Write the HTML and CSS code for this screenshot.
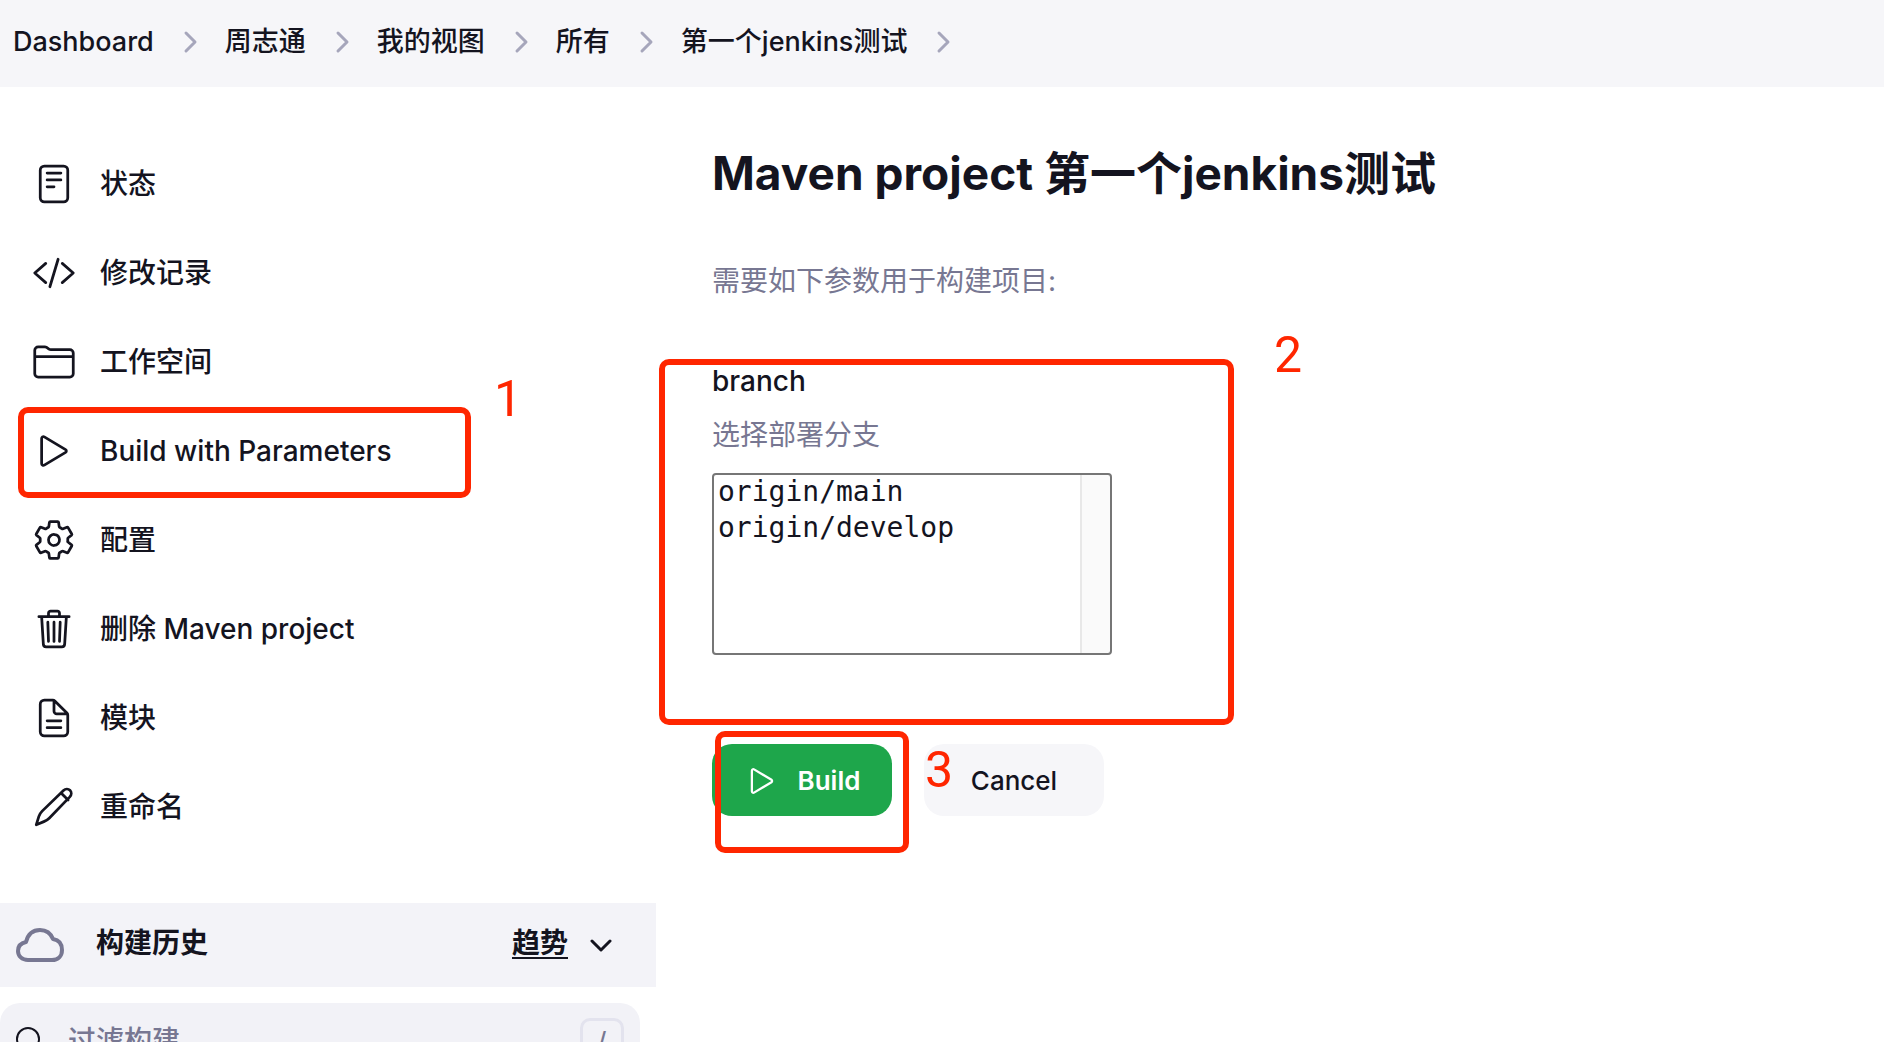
FILE: index.html
```html
<!DOCTYPE html>
<html lang="zh-CN">
<head>
<meta charset="utf-8">
<title>第一个jenkins测试 [Jenkins]</title>
<link rel="stylesheet" href="styles.css">
</head>
<body>
<div class="app">
  <nav class="breadcrumbs" aria-label="breadcrumbs">
    <a href="#">Dashboard</a>
    <svg class="sep" viewBox="0 0 12 20"><path d="M2 1l9 9-9 9"/></svg>
    <a href="#">周志通</a>
    <svg class="sep" viewBox="0 0 12 20"><path d="M2 1l9 9-9 9"/></svg>
    <a href="#">我的视图</a>
    <svg class="sep" viewBox="0 0 12 20"><path d="M2 1l9 9-9 9"/></svg>
    <a href="#">所有</a>
    <svg class="sep" viewBox="0 0 12 20"><path d="M2 1l9 9-9 9"/></svg>
    <a href="#">第一个jenkins测试</a>
    <svg class="sep" viewBox="0 0 12 20"><path d="M2 1l9 9-9 9"/></svg>
  </nav>

  <div class="page">
    <aside class="sidebar">
      <ul class="tasks">
        <li><a class="task" href="#">
          <svg class="icon" viewBox="0 0 512 512"><rect x="96" y="48" width="320" height="416" rx="48"/><path d="M176 128h160M176 208h160M176 288h80"/></svg>
          状态</a></li>
        <li><a class="task" href="#">
          <svg class="icon" viewBox="0 0 512 512"><path d="M160 368L32 256l128-112M352 368l128-112-128-112M304 96l-96 320"/></svg>
          修改记录</a></li>
        <li><a class="task" href="#">
          <svg class="icon" viewBox="0 0 512 512"><path d="M440 432H72a40 40 0 01-40-40V120a40 40 0 0140-40h75.890a40 40 0 0122.190 6.720l27.840 18.560a40 40 0 0022.190 6.720H440a40 40 0 0140 40v240a40 40 0 01-40 40zM32 192h448"/></svg>
          工作空间</a></li>
        <li><a class="task" href="#">
          <svg class="icon" viewBox="0 0 512 512"><path d="M112 111v290c0 17.440 17 28.520 31 20.160l247.900-148.370c12.120-7.250 12.120-26.330 0-33.580L143 90.840c-14-8.360-31 2.720-31 20.160z"/></svg>
          Build with Parameters</a>
          <span class="mark mark-task"></span><span class="mark-number number-task">1</span></li>
        <li><a class="task" href="#">
          <svg class="icon" viewBox="0 0 512 512"><path d="M262.290 192.310a64 64 0 1057.400 57.400 64.130 64.130 0 00-57.400-57.400zM416.390 256a154.340 154.340 0 01-1.530 20.790l45.210 35.460a10.810 10.810 0 012.450 13.750l-42.770 74a10.810 10.810 0 01-13.140 4.590l-44.900-18.080a16.110 16.110 0 00-15.170 1.750A164.480 164.480 0 01325 400.800a15.940 15.940 0 00-8.820 12.140l-6.730 47.890a11.080 11.080 0 01-10.680 9.170h-85.540a11.110 11.110 0 01-10.690-8.870l-6.720-47.820a16.070 16.070 0 00-9-12.220 155.300 155.300 0 01-21.460-12.570 16 16 0 00-15.110-1.710l-44.890 18.070a10.810 10.810 0 01-13.140-4.580l-42.770-74a10.800 10.800 0 012.450-13.750l38.210-30a16.050 16.050 0 006-14.080c-.36-4.170-.58-8.330-.58-12.500s.21-8.270.58-12.350a16 16 0 00-6.070-13.940l-38.190-30A10.810 10.810 0 0149.480 186l42.770-74a10.810 10.810 0 0113.140-4.590l44.900 18.080a16.110 16.110 0 0015.170-1.750A164.480 164.480 0 01187 111.200a15.940 15.940 0 008.820-12.140l6.730-47.890A11.080 11.080 0 01213.230 42h85.540a11.110 11.110 0 0110.690 8.870l6.720 47.820a16.070 16.070 0 009 12.220 155.300 155.300 0 0121.460 12.570 16 16 0 0015.110 1.710l44.890-18.070a10.810 10.810 0 0113.140 4.580l42.770 74a10.800 10.800 0 01-2.450 13.750l-38.210 30a16.050 16.050 0 00-6.050 14.080c.33 4.140.55 8.300.55 12.470z"/></svg>
          配置</a></li>
        <li><a class="task" href="#">
          <svg class="icon" viewBox="0 0 512 512"><path d="M112 112l20 320c.95 18.490 14.400 32 32 32h184c17.670 0 30.870-13.510 32-32l20-320M80 112h352M192 112V72a23.930 23.930 0 0124-24h80a23.930 23.930 0 0124 24v40M256 176v224M184 176l8 224M328 176l-8 224"/></svg>
          删除 Maven project</a></li>
        <li><a class="task" href="#">
          <svg class="icon" viewBox="0 0 512 512"><path d="M416 221.250V416a48 48 0 01-48 48H144a48 48 0 01-48-48V96a48 48 0 0148-48h98.750a32 32 0 0122.620 9.370l141.260 141.260a32 32 0 019.370 22.620zM256 56v120a32 32 0 0032 32h120M176 288h160M176 368h160"/></svg>
          模块</a></li>
        <li><a class="task" href="#">
          <svg class="icon" viewBox="0 0 512 512"><path d="M50 462l30-96c8-24 20-44 38-62L366 64c24-22 56-22 76-2s20 52-2 76L200 386c-18 18-38 30-62 40zM338 92l82 82"/></svg>
          重命名</a></li>
      </ul>

      <section class="history">
        <header class="history-head">
          <svg class="cloud" viewBox="0 0 48 34"><path d="M12 32C6 32 2 28 2 23c0-5 3-8 8-9C12 6 17 2 24 2s11 4 13 9c6 1 9 5 9 11 0 6-4 10-10 10z"/></svg>
          <h2>构建历史</h2>
          <a class="trend" href="#">趋势</a>
          <svg class="chevron" viewBox="0 0 22 13"><path d="M2 2l9 9 9-9"/></svg>
        </header>
        <div class="search">
          <svg class="lens" viewBox="0 0 32 32"><circle cx="12" cy="14" r="11"/><path d="M20 22l9 9"/></svg>
          <input type="text" placeholder="过滤构建" aria-label="过滤构建">
          <kbd>/</kbd>
        </div>
      </section>
    </aside>

    <main class="main">
      <h1>Maven project 第一个jenkins测试</h1>
      <p class="intro">需要如下参数用于构建项目:</p>
      <form>
        <div class="field">
          <label for="branch">branch</label>
          <p class="description">选择部署分支</p>
          <select id="branch" size="5">
            <option>origin/main</option>
            <option>origin/develop</option>
          </select>
          <span class="mark mark-field"></span><span class="mark-number number-field">2</span>
        </div>
        <div class="actions">
          <button class="primary" type="button"><svg class="play" viewBox="0 0 512 512"><path d="M112 111v290c0 17.440 17 28.520 31 20.160l247.900-148.370c12.120-7.250 12.120-26.330 0-33.580L143 90.840c-14-8.360-31 2.720-31 20.160z"/></svg>Build</button>
          <button type="button">Cancel</button>
          <span class="mark mark-build"></span><span class="mark-number number-build">3</span>
        </div>
      </form>
    </main>
  </div>
</div>
</body>
</html>
```

FILE: styles.css
```css
* { box-sizing: border-box; }

body {
  margin: 0;
  background: #fff;
  color: #14141f;
  font: 500 28px/40px Inter, "Noto Sans CJK SC", sans-serif;
}

a { color: inherit; text-decoration: none; }
h1, h2, p, ul { margin: 0; padding: 0; }
ul { list-style: none; }

svg {
  flex: none;
  fill: none;
  stroke: currentColor;
  stroke-linecap: round;
  stroke-linejoin: round;
}

.app {
  display: flex;
  flex-direction: column;
  height: 100vh;
  overflow: hidden;
}

.breadcrumbs {
  display: flex;
  flex: none;
  align-items: center;
  gap: 29px;
  height: 87px;
  padding: 0 13px 3px;
  background: #f6f6f9;
  font-size: 27px;
}
.sep { width: 12px; height: 20px; margin-left: 1px; color: #a6a6bb; stroke-width: 3; overflow: visible; }

.page { display: flex; flex: 1; min-height: 0; }

.sidebar { flex: none; width: 656px; }
.tasks { padding: 52px 0; }
.tasks li { position: relative; }
.task {
  display: flex;
  align-items: center;
  gap: 24px;
  height: 89px;
  padding: 0 32px;
}
.icon { width: 44px; height: 44px; stroke-width: 32; }

.history-head {
  display: flex;
  align-items: center;
  height: 84px;
  padding: 0 44px 0 16px;
  background: #f3f3f8;
}
.history-head h2 { margin-left: 32px; padding-bottom: 4px; font-size: 28px; font-weight: 600; }
.cloud { width: 48px; height: 34px; color: #777792; stroke-width: 4; }
.trend {
  margin-left: auto;
  padding-bottom: 4px;
  font-weight: 600;
  text-decoration: underline;
  text-decoration-thickness: 2px;
  text-underline-offset: 4px;
}
.chevron { width: 22px; height: 13px; margin-left: 22px; stroke-width: 3; }

.search {
  display: flex;
  align-items: center;
  height: 76px;
  margin: 16px 16px 0 0;
  padding: 0 16px;
  border-radius: 20px;
  background: #f2f2f7;
}
.lens { width: 32px; height: 32px; stroke-width: 2; overflow: visible; }
.search input {
  flex: 1;
  min-width: 0;
  margin-left: 20px;
  padding: 0;
  border: 0;
  background: none;
  color: inherit;
  font: inherit;
  outline: 0;
}
.search input::placeholder { color: #777792; opacity: 1; }
kbd {
  width: 44px;
  height: 46px;
  border: 3px solid #e3e3ee;
  border-radius: 10px;
  color: #777792;
  font: 500 24px/40px Inter, sans-serif;
  text-align: center;
}

.main { flex: 1; padding: 54px 56px 0; }
h1 { font-size: 46px; font-weight: 700; line-height: 64px; }
.intro, .description { color: #777792; font-weight: 400; }
.intro { margin-top: 56px; }

.field { position: relative; margin-top: 60px; }
.field label { display: block; }
.description { margin-top: 14px; }
select {
  display: block;
  width: 400px;
  height: 182px;
  margin-top: 18px;
  padding: 0;
  border: 2px solid #767676;
  border-radius: 4px;
  background: linear-gradient(to right, #e8e8e8 2px, #fafafa 2px) right / 30px 100% no-repeat #fff;
  color: #14141f;
  font: 400 28px/36px "DejaVu Sans Mono", monospace;
  overflow: hidden;
}
option { min-height: 36px; padding: 0 4px; }

.actions { display: flex; gap: 32px; position: relative; margin-top: 89px; }
button {
  display: flex;
  align-items: center;
  justify-content: center;
  gap: 18px;
  width: 180px;
  height: 72px;
  padding: 2px 0 0;
  border: 0;
  border-radius: 20px;
  background: #f6f6f9;
  color: inherit;
  font: 500 26px/40px Inter, sans-serif;
}
.primary { background: #1ea64b; color: #fff; font-weight: 600; }
.play { width: 36px; height: 36px; stroke-width: 32; }

/* Red annotations laid over the page */
.mark {
  position: absolute;
  border: 6px solid #ff2600;
  border-radius: 10px;
  pointer-events: none;
}
.mark-number {
  position: absolute;
  color: #ff2600;
  font: 400 50px/50px Roboto, sans-serif;
}
.mark-task { left: 18px; top: 1px; width: 453px; height: 91px; }
.number-task { left: 494px; top: -32px; }
.mark-field { left: -53px; top: -2px; width: 575px; height: 366px; }
.number-field { left: 562px; top: -31px; }
.mark-build { left: 3px; top: -13px; width: 194px; height: 122px; }
.number-build { left: 213px; top: 1px; }
```
